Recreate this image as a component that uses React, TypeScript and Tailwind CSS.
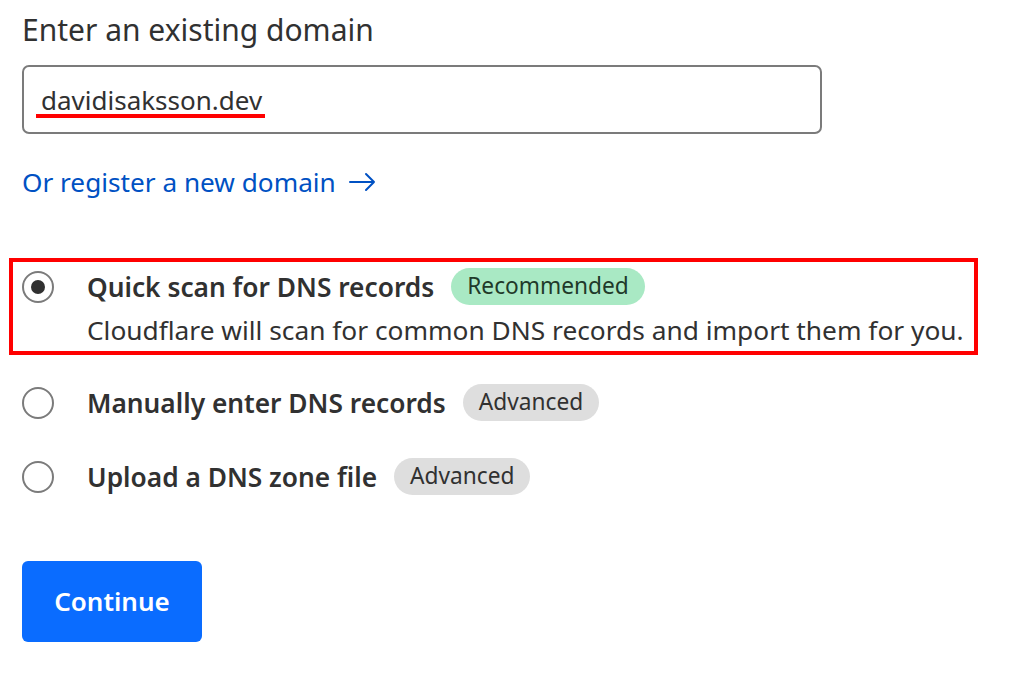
const font = { fontFamily: '"Noto Sans", "Open Sans", sans-serif' };

function Radio({ checked }: { checked?: boolean }) {
  return (
    <span className="flex h-[32px] w-[32px] shrink-0 items-center justify-center rounded-full border-2 border-[#7b7b7b] bg-white">
      {checked && <span className="h-[14px] w-[14px] rounded-full bg-[#313131]" />}
    </span>
  );
}

function Option({
  title,
  badge,
  green,
  checked,
  desc,
}: {
  title: string;
  badge: string;
  green?: boolean;
  checked?: boolean;
  desc?: string;
}) {
  return (
    <div className="flex flex-col">
      <div className="flex h-[37px] items-center">
        <Radio checked={checked} />
        <span className="ml-[33px] text-[26.3px] leading-[36px] font-semibold text-[#313131]">{title}</span>
        <span
          className={
            green
              ? "ml-[17px] flex h-[37px] items-center rounded-full bg-[#a9e9c4] px-[16px] text-[22.7px] text-[#1f3a2a]"
              : "ml-[17px] flex h-[37px] items-center rounded-full bg-[#dedede] px-[16px] text-[22.7px] text-[#313131]"
          }
        >
          {badge}
        </span>
      </div>
      {desc && (
        <p className="mt-[8px] ml-[65px] text-[26.3px] leading-[34px] text-[#313131]">{desc}</p>
      )}
    </div>
  );
}

function Arrow() {
  return (
    <svg width="28" height="20" viewBox="0 0 28 20" fill="none" stroke="currentColor" strokeWidth="2" strokeLinecap="round" strokeLinejoin="round">
      <path d="M2 10H26M18 2L26 10L18 18" />
    </svg>
  );
}

export default function App() {
  return (
    <div className="min-h-screen bg-white px-[22px] pt-[12px]" style={font}>
      <h1 className="text-[30px] leading-[36px] text-[#313131]">Enter an existing domain</h1>

      <div className="relative mt-[17px] flex h-[69px] w-[800px] items-center rounded-[7px] border-2 border-[#7b7b7b] px-[17px]">
        <span className="text-[26px] leading-[34px] text-[#313131]">davidisaksson.dev</span>
        <span className="absolute left-[12px] top-[47px] h-[4px] w-[229px] bg-[#ff0000]" />
      </div>

      <a className="mt-[31px] flex h-[34px] items-center gap-[12px] text-[26.2px] leading-[34px] text-[#0051c3]">
        Or register a new domain
        <Arrow />
      </a>

      <div className="mt-[59px] flex flex-col">
        <div className="-ml-[13px] w-[969px] border-4 border-[#ff0000] pt-[6px] pb-[4px] pl-[9px]">
          <Option
            checked
            title="Quick scan for DNS records"
            badge="Recommended"
            green
            desc="Cloudflare will scan for common DNS records and import them for you."
          />
        </div>
        <div className="mt-[29px]">
          <Option title="Manually enter DNS records" badge="Advanced" />
        </div>
        <div className="mt-[37px]">
          <Option title="Upload a DNS zone file" badge="Advanced" />
        </div>
      </div>

      <button className="mt-[66px] h-[81px] w-[180px] rounded-[6px] bg-[#0a6cff] text-[26px] font-semibold text-white">
        Continue
      </button>
    </div>
  );
}
